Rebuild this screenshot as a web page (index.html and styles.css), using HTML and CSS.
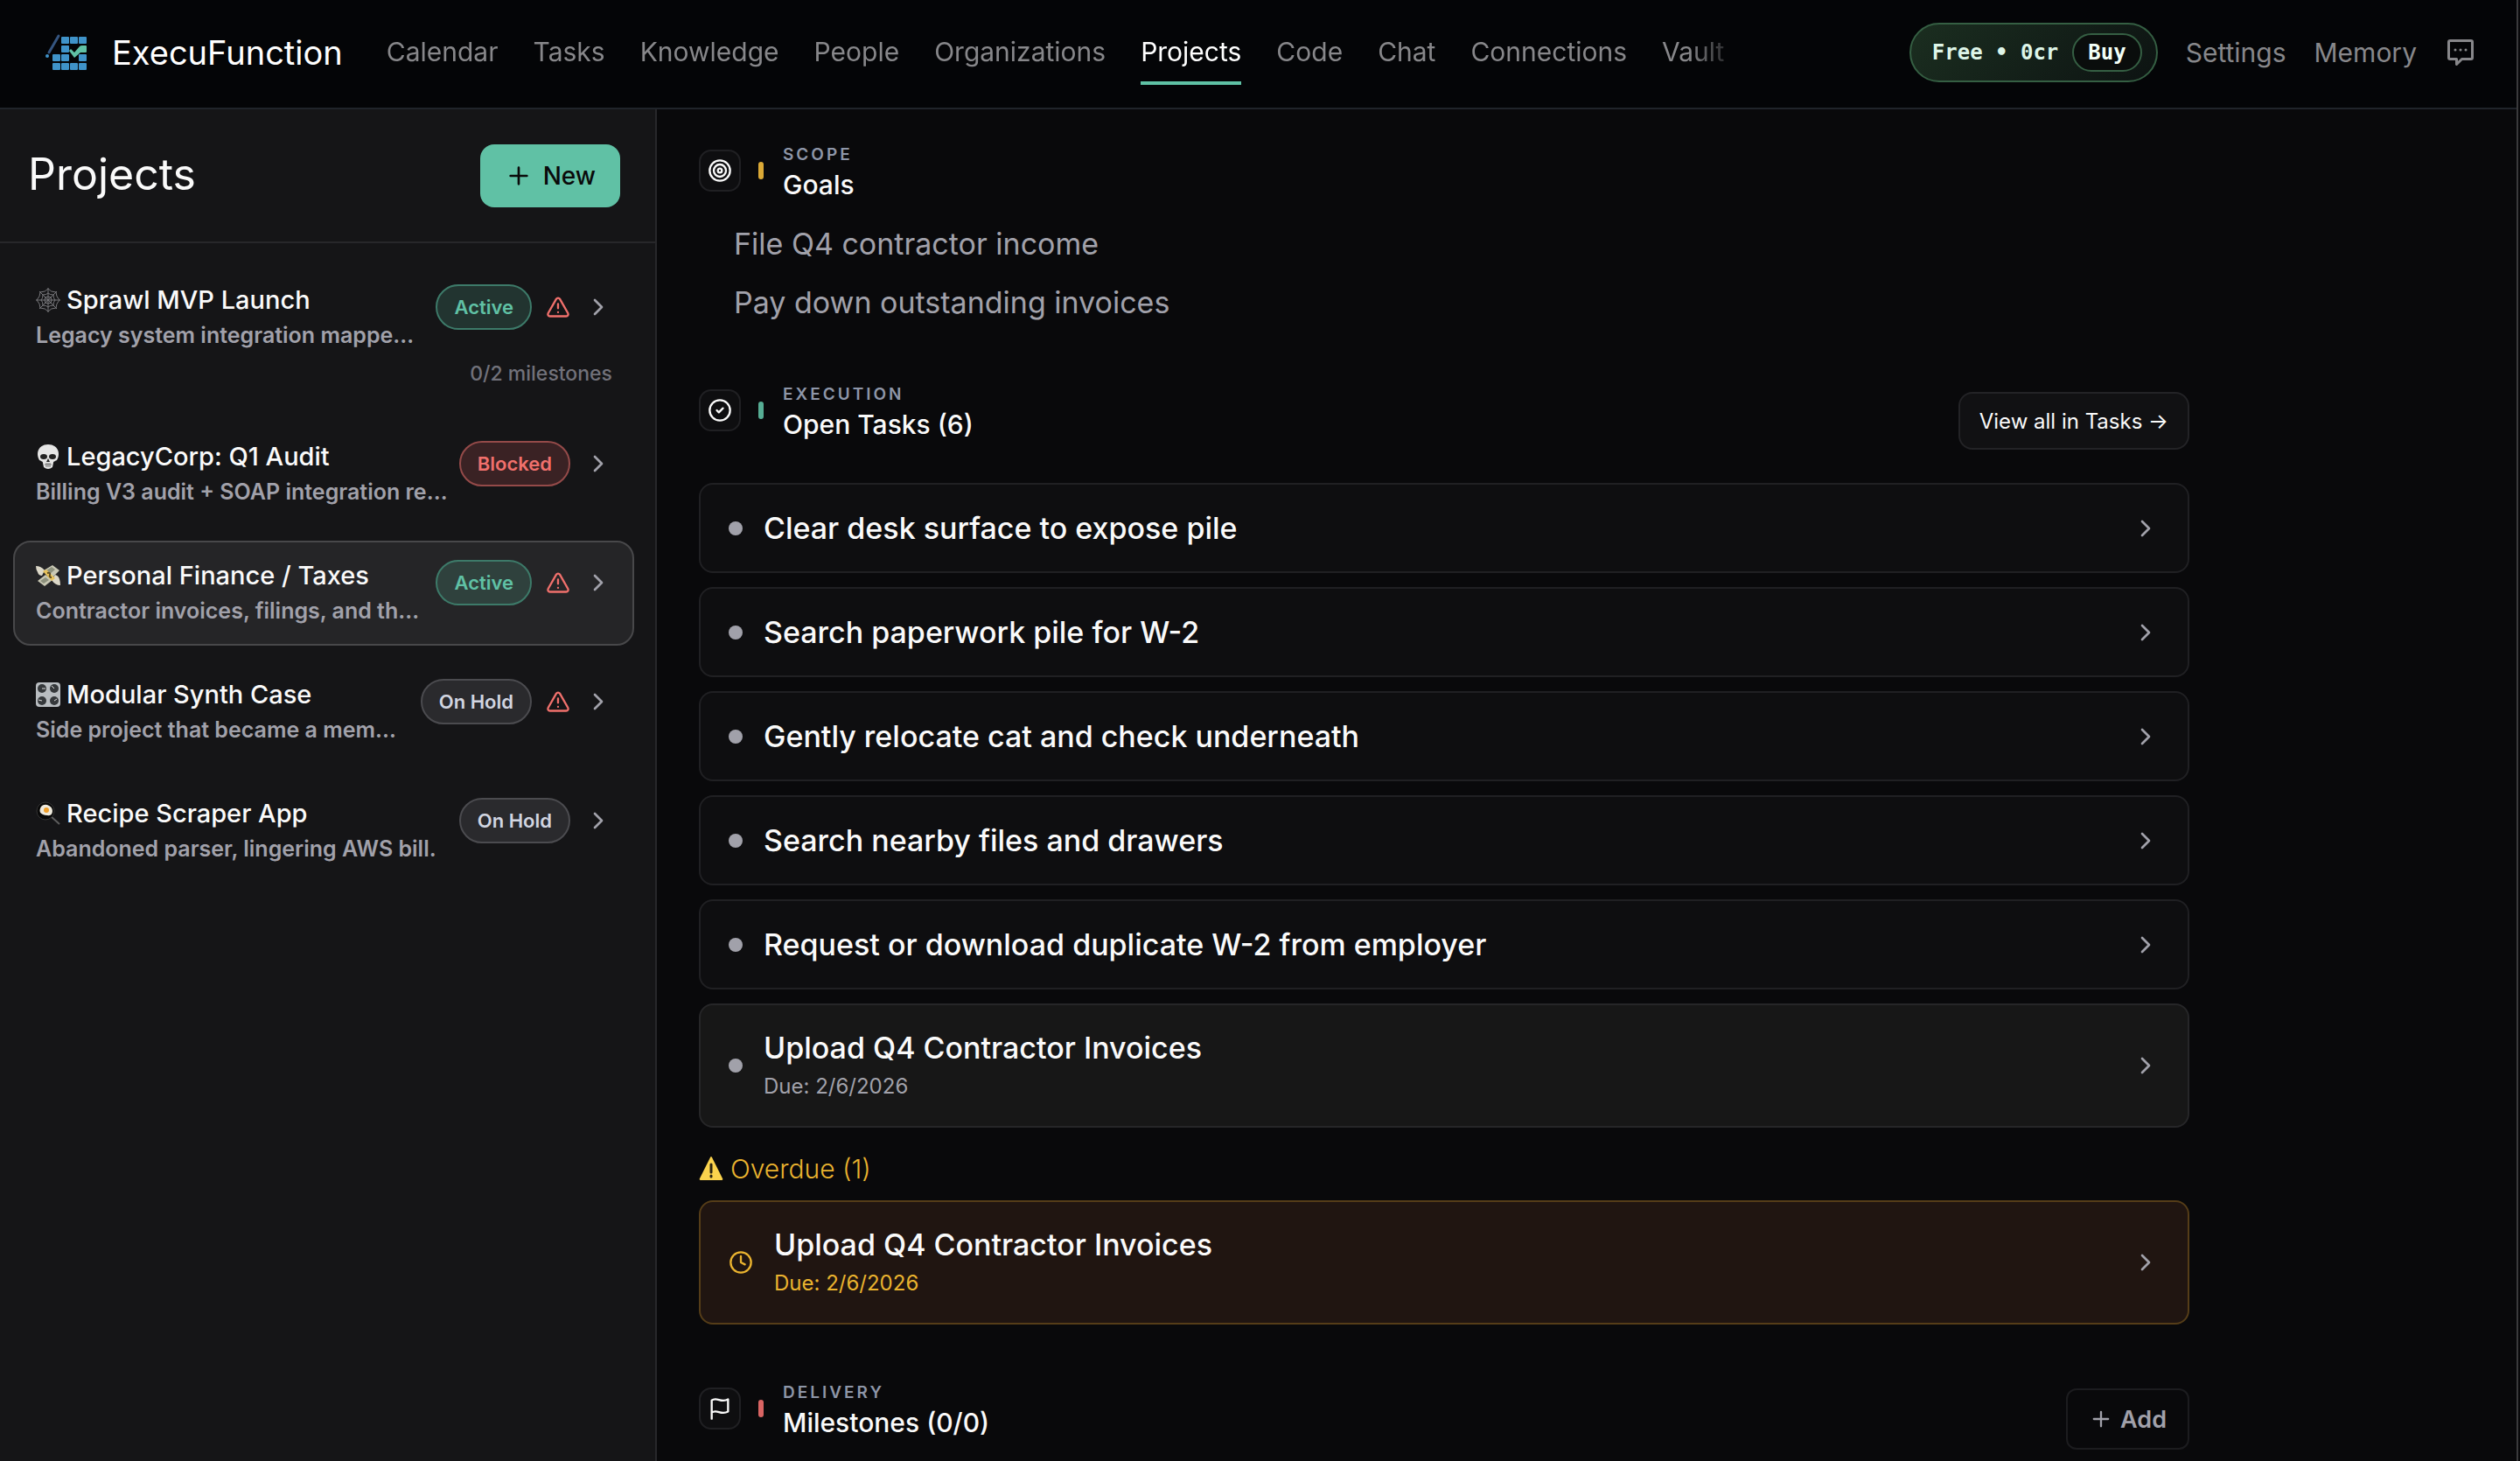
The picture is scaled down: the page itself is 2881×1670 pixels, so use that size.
FILE: index.html
```html
<!DOCTYPE html>
<html lang="en">
<head>
    <meta charset="UTF-8">
    <meta name="viewport" content="width=device-width, initial-scale=1.0">
    <title>Projects - ExecuFunction</title>
    <link rel="stylesheet" href="styles.css">
</head>
<body>
    <!-- shared icons -->
    <svg class="sprite" aria-hidden="true">
        <symbol id="chevron" viewBox="0 0 24 24"><path d="m9 18 6-6-6-6"/></symbol>
        <symbol id="plus" viewBox="0 0 24 24"><path d="M5 12h14M12 5v14"/></symbol>
        <symbol id="alert" viewBox="0 0 24 24"><path d="m21.7 18-8-14a2 2 0 0 0-3.4 0l-8 14A2 2 0 0 0 4 21h16a2 2 0 0 0 1.7-3M12 9v4M12 17h.01"/></symbol>
    </svg>

    <header class="topbar">
        <a href="#" class="brand">
            <svg class="logo" viewBox="0 0 48 44" aria-hidden="true">
                <path d="M4 22 15 3" stroke="#35557f" stroke-width="3" stroke-linecap="round"/>
                <circle cx="2" cy="26" r="2" fill="#3f93c9"/>
                <g fill="#3f93c9">
                    <rect x="18" y="4" width="9" height="8" rx="1"/>
                    <rect x="28" y="4" width="9" height="8" rx="1"/>
                    <rect x="38" y="4" width="9" height="8" rx="1"/>
                    <rect x="18" y="14" width="9" height="8" rx="1"/>
                    <rect x="8" y="24" width="9" height="8" rx="1"/>
                    <rect x="18" y="24" width="9" height="8" rx="1"/>
                    <rect x="38" y="24" width="9" height="8" rx="1"/>
                    <rect x="8" y="34" width="9" height="8" rx="1"/>
                    <rect x="18" y="34" width="9" height="8" rx="1"/>
                    <rect x="28" y="34" width="9" height="8" rx="1"/>
                    <rect x="38" y="34" width="9" height="8" rx="1"/>
                </g>
                <path d="m27 20 2-2 4 4 6-7q1-1 3-1h4q1 0 1 1v6q0 1-1 1h-6l-7 6z" fill="#60c1a5"/>
            </svg>
            <span class="brand-name">ExecuFunction</span>
        </a>
        <nav class="nav">
            <a href="#">Calendar</a>
            <a href="#">Tasks</a>
            <a href="#">Knowledge</a>
            <a href="#">People</a>
            <a href="#">Organizations</a>
            <a href="#" class="current">Projects</a>
            <a href="#">Code</a>
            <a href="#">Chat</a>
            <a href="#">Connections</a>
            <a href="#">Vault</a>
        </nav>
        <div class="account">
            <div class="credits">
                <span>Free • 0cr</span>
                <button type="button">Buy</button>
            </div>
            <a href="#">Settings</a>
            <a href="#">Memory</a>
            <button type="button" class="feedback" aria-label="Feedback">
                <svg class="icon icon-36" viewBox="0 0 24 24"><path d="M4 3h16a1 1 0 0 1 1 1v12a1 1 0 0 1-1 1h-7l-4 4v-4H4a1 1 0 0 1-1-1V4a1 1 0 0 1 1-1zM8 10h.01M12 10h.01M16 10h.01"/></svg>
            </button>
        </div>
    </header>

    <div class="layout">
        <aside class="sidebar">
            <div class="sidebar-head">
                <h1>Projects</h1>
                <button type="button" class="new-btn">
                    <svg class="icon icon-32"><use href="#plus"/></svg>New
                </button>
            </div>

            <div class="project-list">
                <a href="#" class="project">
                    <div class="project-row">
                        <div class="project-text">
                            <div class="project-name">
                                <svg class="emoji" viewBox="0 0 28 28" fill="none" stroke="#77777b" stroke-width="1"><path d="M14 0v28M0 14h28M4 4l20 20M24 4 4 24"/><path d="M14 1q3 4 9 4 0 5 4 9-4 4-4 9-6 0-9 4-3-4-9-4 0-5-4-9 4-4 4-9 6 0 9-4z"/><path d="M14 6q2 2 6 2 0 4 2 6-2 2-2 6-4 0-6 2-2-2-6-2 0-4-2-6 2-2 2-6 4 0 6-2zM14 10l3 1 1 3-1 3-3 1-3-1-1-3 1-3z"/></svg>
                                Sprawl MVP Launch
                            </div>
                            <div class="project-desc">Legacy system integration mappe…</div>
                        </div>
                        <span class="pill active">Active</span>
                        <svg class="icon icon-28 warn"><use href="#alert"/></svg>
                        <svg class="icon icon-32 arrow"><use href="#chevron"/></svg>
                    </div>
                    <div class="milestones">0/2 milestones</div>
                </a>

                <a href="#" class="project">
                    <div class="project-row">
                        <div class="project-text">
                            <div class="project-name">
                                <svg class="emoji" viewBox="0 0 28 28"><path d="M14 0C6 0 2 5 2 11c0 3 1 5 2 7 1 1 4 1 4 3l1 5q5 4 10 0l1-5c0-2 3-2 4-3 1-2 2-4 2-7 0-6-4-11-12-11z" fill="#e6e6e6"/><ellipse cx="9" cy="14" rx="4" ry="3" fill="#222"/><ellipse cx="19" cy="14" rx="4" ry="3" fill="#222"/><path d="m14 16-2 4h4z" fill="#222"/><path d="M10 23h8M12 21v5M14 21v5M16 21v5" stroke="#777" stroke-width="1"/></svg>
                                LegacyCorp: Q1 Audit
                            </div>
                            <div class="project-desc">Billing V3 audit + SOAP integration re…</div>
                        </div>
                        <span class="pill blocked">Blocked</span>
                        <svg class="icon icon-32 arrow"><use href="#chevron"/></svg>
                    </div>
                </a>

                <a href="#" class="project selected">
                    <div class="project-row">
                        <div class="project-text">
                            <div class="project-name">
                                <svg class="emoji" viewBox="0 0 28 28"><path d="M0 3q6 0 10 5l-3 6q-4 0-5-4-2-3-2-7zM28 25q-6 0-10-6l4-6q4 1 5 5 1 3 1 7z" fill="#dcd8c8"/><path d="m9 8 10-6 8 6-10 10zM2 20l9-7 8 6-9 7z" fill="#c9c8b4"/><path d="m12 8 6-4 4 3-6 5zM5 20l6-4 4 3-6 4z" fill="#8d917d"/><path d="m8 9 4-2 10 10-4 3z" fill="#e7c15b"/><path d="M13 11q4-1 3 2t2 3" fill="none" stroke="#5d4c20" stroke-width="2"/></svg>
                                Personal Finance / Taxes
                            </div>
                            <div class="project-desc">Contractor invoices, filings, and th…</div>
                        </div>
                        <span class="pill active">Active</span>
                        <svg class="icon icon-28 warn"><use href="#alert"/></svg>
                        <svg class="icon icon-32 arrow"><use href="#chevron"/></svg>
                    </div>
                </a>

                <a href="#" class="project">
                    <div class="project-row">
                        <div class="project-text">
                            <div class="project-name">
                                <svg class="emoji" viewBox="0 0 28 28"><rect width="28" height="28" rx="4" fill="#b9bdc1"/><g fill="#35383b"><circle cx="7" cy="7" r="5"/><circle cx="21" cy="7" r="5"/><circle cx="7" cy="21" r="5"/><circle cx="21" cy="21" r="5"/></g><path d="M7 7h4M21 7l-3-3M7 21l-4-1M21 21l3-2" stroke="#ddd" stroke-width="1"/></svg>
                                Modular Synth Case
                            </div>
                            <div class="project-desc">Side project that became a mem…</div>
                        </div>
                        <span class="pill">On Hold</span>
                        <svg class="icon icon-28 warn"><use href="#alert"/></svg>
                        <svg class="icon icon-32 arrow"><use href="#chevron"/></svg>
                    </div>
                </a>

                <a href="#" class="project">
                    <div class="project-row">
                        <div class="project-text">
                            <div class="project-name">
                                <svg class="emoji" viewBox="0 0 28 28"><path d="m17 17 10 9" stroke="#5d5d5d" stroke-width="2"/><circle cx="11" cy="11" r="10" fill="#080808" stroke="#333" stroke-width="1"/><path d="M5 8q2-5 8-4 6 2 6 7 0 6-6 5-3 0-5-1-5-2-3-7z" fill="#eee9dc"/><circle cx="12" cy="10" r="3" fill="#f0a02c"/></svg>
                                Recipe Scraper App
                            </div>
                            <div class="project-desc">Abandoned parser, lingering AWS bill.</div>
                        </div>
                        <span class="pill">On Hold</span>
                        <svg class="icon icon-32 arrow"><use href="#chevron"/></svg>
                    </div>
                </a>
            </div>
        </aside>

        <main class="content">
            <!-- goals -->
            <section>
                <div class="section-head">
                    <div class="section-title">
                        <span class="section-icon"><svg class="icon icon-28" viewBox="0 0 24 24"><circle cx="12" cy="12" r="10"/><circle cx="12" cy="12" r="6"/><circle cx="12" cy="12" r="2"/></svg></span>
                        <span class="tick gold"></span>
                        <div>
                            <div class="eyebrow">SCOPE</div>
                            <h2>Goals</h2>
                        </div>
                    </div>
                </div>
                <ul class="goals">
                    <li>File Q4 contractor income</li>
                    <li>Pay down outstanding invoices</li>
                </ul>
            </section>

            <!-- open tasks -->
            <section>
                <div class="section-head">
                    <div class="section-title">
                        <span class="section-icon"><svg class="icon icon-28" viewBox="0 0 24 24"><circle cx="12" cy="12" r="10"/><path d="m9 12 2 2 4-4"/></svg></span>
                        <span class="tick green"></span>
                        <div>
                            <div class="eyebrow">EXECUTION</div>
                            <h2>Open Tasks (6)</h2>
                        </div>
                    </div>
                    <button type="button" class="view-btn">View all in Tasks →</button>
                </div>
                <div class="tasks">
                    <a href="#" class="task">
                        <span class="dot"></span>
                        <span class="task-name">Clear desk surface to expose pile</span>
                        <svg class="icon icon-32"><use href="#chevron"/></svg>
                    </a>
                    <a href="#" class="task">
                        <span class="dot"></span>
                        <span class="task-name">Search paperwork pile for W-2</span>
                        <svg class="icon icon-32"><use href="#chevron"/></svg>
                    </a>
                    <a href="#" class="task">
                        <span class="dot"></span>
                        <span class="task-name">Gently relocate cat and check underneath</span>
                        <svg class="icon icon-32"><use href="#chevron"/></svg>
                    </a>
                    <a href="#" class="task">
                        <span class="dot"></span>
                        <span class="task-name">Search nearby files and drawers</span>
                        <svg class="icon icon-32"><use href="#chevron"/></svg>
                    </a>
                    <a href="#" class="task">
                        <span class="dot"></span>
                        <span class="task-name">Request or download duplicate W-2 from employer</span>
                        <svg class="icon icon-32"><use href="#chevron"/></svg>
                    </a>
                    <a href="#" class="task has-due">
                        <span class="dot"></span>
                        <span class="task-name">Upload Q4 Contractor Invoices
                            <span class="due">Due: 2/6/2026</span>
                        </span>
                        <svg class="icon icon-32"><use href="#chevron"/></svg>
                    </a>
                </div>

                <h3 class="overdue-title">
                    <svg class="emoji" viewBox="0 0 28 28"><path d="M13 1q1-2 2 0l12 24q1 2-1 2H2q-2 0-1-2z" fill="#fbd34d"/><path d="M14 9v9M14 22v1" stroke="#2b2412" stroke-width="3" stroke-linecap="round"/></svg>
                    Overdue (1)
                </h3>
                <a href="#" class="task has-due overdue">
                    <svg class="icon icon-28 clock" viewBox="0 0 24 24"><circle cx="12" cy="12" r="10"/><path d="M12 6v6l4 2"/></svg>
                    <span class="task-name">Upload Q4 Contractor Invoices
                        <span class="due">Due: 2/6/2026</span>
                    </span>
                    <svg class="icon icon-32"><use href="#chevron"/></svg>
                </a>
            </section>

            <!-- milestones -->
            <section>
                <div class="section-head">
                    <div class="section-title">
                        <span class="section-icon"><svg class="icon icon-28" viewBox="0 0 24 24"><path d="M4 22V4c5-4 9 3 16-1v12c-7 4-11-3-16 1"/></svg></span>
                        <span class="tick red"></span>
                        <div>
                            <div class="eyebrow">DELIVERY</div>
                            <h2>Milestones (0/0)</h2>
                        </div>
                    </div>
                    <button type="button" class="add-btn">
                        <svg class="icon icon-28"><use href="#plus"/></svg>Add
                    </button>
                </div>
            </section>
        </main>
    </div>
</body>
</html>
```
FILE: styles.css
```css
* {
    box-sizing: border-box;
}
body {
    margin: 0 2px 0 0;
    min-height: 100vh;
    display: flex;
    flex-direction: column;
    border-right: 2px solid #3a3a3c;
    background: #09090b;
    color: #fafafa;
    font-family: Inter, "Open Sans", sans-serif;
    font-size: 28px;
}
html {
    background: #09090b;
}
h1, h2, h3, ul {
    margin: 0;
    padding: 0;
    font-weight: 500;
}
a {
    color: inherit;
    text-decoration: none;
}
button {
    font-family: inherit;
    cursor: pointer;
}
.sprite {
    display: none;
}
.icon {
    flex: none;
    fill: none;
    stroke: currentColor;
    stroke-width: 2;
    stroke-linecap: round;
    stroke-linejoin: round;
}
.icon-28 {
    width: 28px;
    height: 28px;
}
.icon-32 {
    width: 32px;
    height: 32px;
}
.icon-36 {
    width: 36px;
    height: 36px;
}
.emoji {
    flex: none;
    width: 28px;
    height: 28px;
}

/* top bar */
.topbar {
    height: 125px;
    display: flex;
    align-items: center;
    padding: 0 46px 3px 52px;
    border-bottom: 2px solid #20242a;
    background: #040507;
}
.brand {
    display: flex;
    align-items: center;
    gap: 28px;
    margin-right: 50px;
}
.logo {
    width: 48px;
    height: 44px;
    fill: none;
}
.brand-name {
    font-size: 38px;
    line-height: 48px;
    font-weight: 400;
    color: #fff;
}
.nav {
    display: flex;
    gap: 40px;
    padding-right: 20px;
    -webkit-mask-image: linear-gradient(to right, #000 calc(100% - 60px), transparent);
    mask-image: linear-gradient(to right, #000 calc(100% - 60px), transparent);
}
.nav a, .account a {
    color: #87878a;
    font-size: 30px;
    line-height: 40px;
}
.nav a {
    padding: 16px 0 14px;
    border-bottom: 4px solid transparent;
}
.nav .current {
    color: #fff;
    border-color: #5fc2a5;
}
.account {
    margin-left: auto;
    display: flex;
    align-items: center;
    gap: 32px;
}
.credits {
    display: flex;
    align-items: center;
    gap: 16px;
    height: 68px;
    padding: 0 16px 0 24px;
    border: 2px solid #355f43;
    border-radius: 34px;
    background: linear-gradient(135deg, #1b2e20, #0d1312);
    color: #def5e8;
    font: bold 24px "DejaVu Sans Mono", monospace;
}
.credits button {
    height: 44px;
    padding: 0 16px;
    border: 2px solid #355f43;
    border-radius: 22px;
    background: #0a0d0c;
    color: #f2fff7;
    font: inherit;
}
.feedback {
    display: flex;
    padding: 0;
    border: 0;
    background: none;
    color: #87878a;
}

/* sidebar */
.layout {
    flex: 1;
    display: flex;
}
.sidebar {
    flex: none;
    width: 751px;
    border-right: 2px solid #27272a;
    background: #151517;
}
.sidebar-head {
    height: 153px;
    display: flex;
    align-items: center;
    justify-content: space-between;
    padding: 0 40px 0 32px;
    border-bottom: 2px solid #27272a;
}
.sidebar-head h1 {
    padding-bottom: 4px;
    font-size: 50px;
    font-weight: 400;
}
.new-btn {
    display: flex;
    align-items: center;
    gap: 12px;
    height: 72px;
    padding: 0 28px;
    border: 0;
    border-radius: 16px;
    background: #60c1a5;
    color: #0a0a0a;
    font-size: 28px;
    font-weight: 500;
}
.project-list {
    display: flex;
    flex-direction: column;
    gap: 16px;
    padding: 25px 24px 24px 15px;
}
.project {
    padding: 18px 23px 18px 24px;
    border: 2px solid transparent;
    border-radius: 20px;
}
.project.selected {
    background: #252527;
    border-color: #48484a;
}
.project-row {
    display: flex;
    gap: 16px;
    height: 80px;
}
.project-text {
    flex: 1;
    min-width: 0;
    white-space: nowrap;
}
.project-name {
    display: flex;
    align-items: center;
    gap: 7px;
    font-size: 29px;
    line-height: 40px;
    font-weight: 500;
}
.project-desc {
    font-size: 25px;
    line-height: 40px;
    font-weight: 600;
    color: #a1a1aa;
}
.project-row .icon {
    margin-top: 14px;
    color: #a1a1aa;
}
.project-row .arrow {
    margin-top: 12px;
}
.project-row .warn {
    color: #f0706c;
}
.pill {
    height: 52px;
    margin-top: 2px;
    padding: 0 19px;
    border: 2px solid #4b4b4f;
    border-radius: 26px;
    background: #2a2a2d;
    color: #d1d5e0;
    font-size: 22px;
    line-height: 48px;
    font-weight: 600;
}
.pill.active {
    border-color: #3d7a69;
    background: rgba(96, 193, 165, 0.18);
    color: #60c1a5;
}
.pill.blocked {
    border-color: #944a49;
    background: #3a2224;
    color: #f0706c;
}
.milestones {
    margin-top: 5px;
    font-size: 23px;
    line-height: 38px;
    font-weight: 500;
    color: #71717a;
    text-align: right;
}

/* content */
.content {
    flex: 1;
    display: flex;
    flex-direction: column;
    gap: 64px;
    max-width: 1800px;
    padding: 38px 48px 0;
}
.section-head {
    display: flex;
    align-items: center;
    justify-content: space-between;
}
.section-title {
    display: flex;
    align-items: center;
    margin-bottom: 24px;
}
.section-icon {
    width: 48px;
    height: 48px;
    display: flex;
    align-items: center;
    justify-content: center;
    border: 2px solid #202023;
    border-radius: 14px;
    background: #0e0e10;
}
.tick {
    width: 6px;
    height: 20px;
    margin: 0 22px 0 20px;
    border-radius: 3px;
}
.gold {
    background: #dba936;
}
.green {
    background: #56ad94;
}
.red {
    background: #d96463;
}
.eyebrow {
    margin-bottom: 4px;
    font-size: 19px;
    line-height: 28px;
    font-weight: 600;
    letter-spacing: 3px;
    color: #8e96a8;
}
h2 {
    font-size: 30px;
    line-height: 32px;
}
.goals {
    display: flex;
    flex-direction: column;
    gap: 12px;
    padding-left: 40px;
    list-style: none;
    font-size: 34px;
    line-height: 55px;
    font-weight: 400;
    color: #a1a1aa;
}
.view-btn, .add-btn {
    border: 2px solid #232326;
    border-radius: 16px;
    background: #111113;
    color: #fafafa;
    font-size: 24px;
}
.view-btn {
    height: 66px;
    padding: 0 22px;
}
.add-btn {
    display: flex;
    align-items: center;
    gap: 8px;
    height: 70px;
    padding: 0 24px;
    border-color: #1c1c1f;
    border-radius: 12px;
    background: none;
    color: #a1a1aa;
    font-size: 27px;
    font-weight: 600;
}
.tasks {
    display: flex;
    flex-direction: column;
    gap: 16px;
    margin-top: 27px;
}
.task {
    display: flex;
    align-items: center;
    gap: 24px;
    min-height: 103px;
    padding: 0 32px;
    border: 2px solid #202023;
    border-radius: 16px;
    background: #0e0e10;
}
.task.has-due {
    min-height: 142px;
    background: #171717;
    border-color: #262628;
}
.task.overdue {
    background: #201511;
    border-color: #553d18;
}
.task .icon {
    color: #a1a1aa;
}
.task .clock, .task.overdue .due {
    color: #eab32f;
}
.dot {
    width: 16px;
    height: 16px;
    border-radius: 50%;
    background: #a1a1aa;
}
.task-name {
    flex: 1;
    font-size: 34px;
    line-height: 48px;
    font-weight: 500;
}
.due {
    display: block;
    font-size: 24px;
    line-height: 40px;
    font-weight: 400;
    color: #a1a1aa;
}
.overdue-title {
    display: flex;
    align-items: center;
    gap: 8px;
    margin: 29px 0 18px;
    font-size: 30px;
    line-height: 36px;
    font-weight: 300;
    color: #eab32f;
}
```
